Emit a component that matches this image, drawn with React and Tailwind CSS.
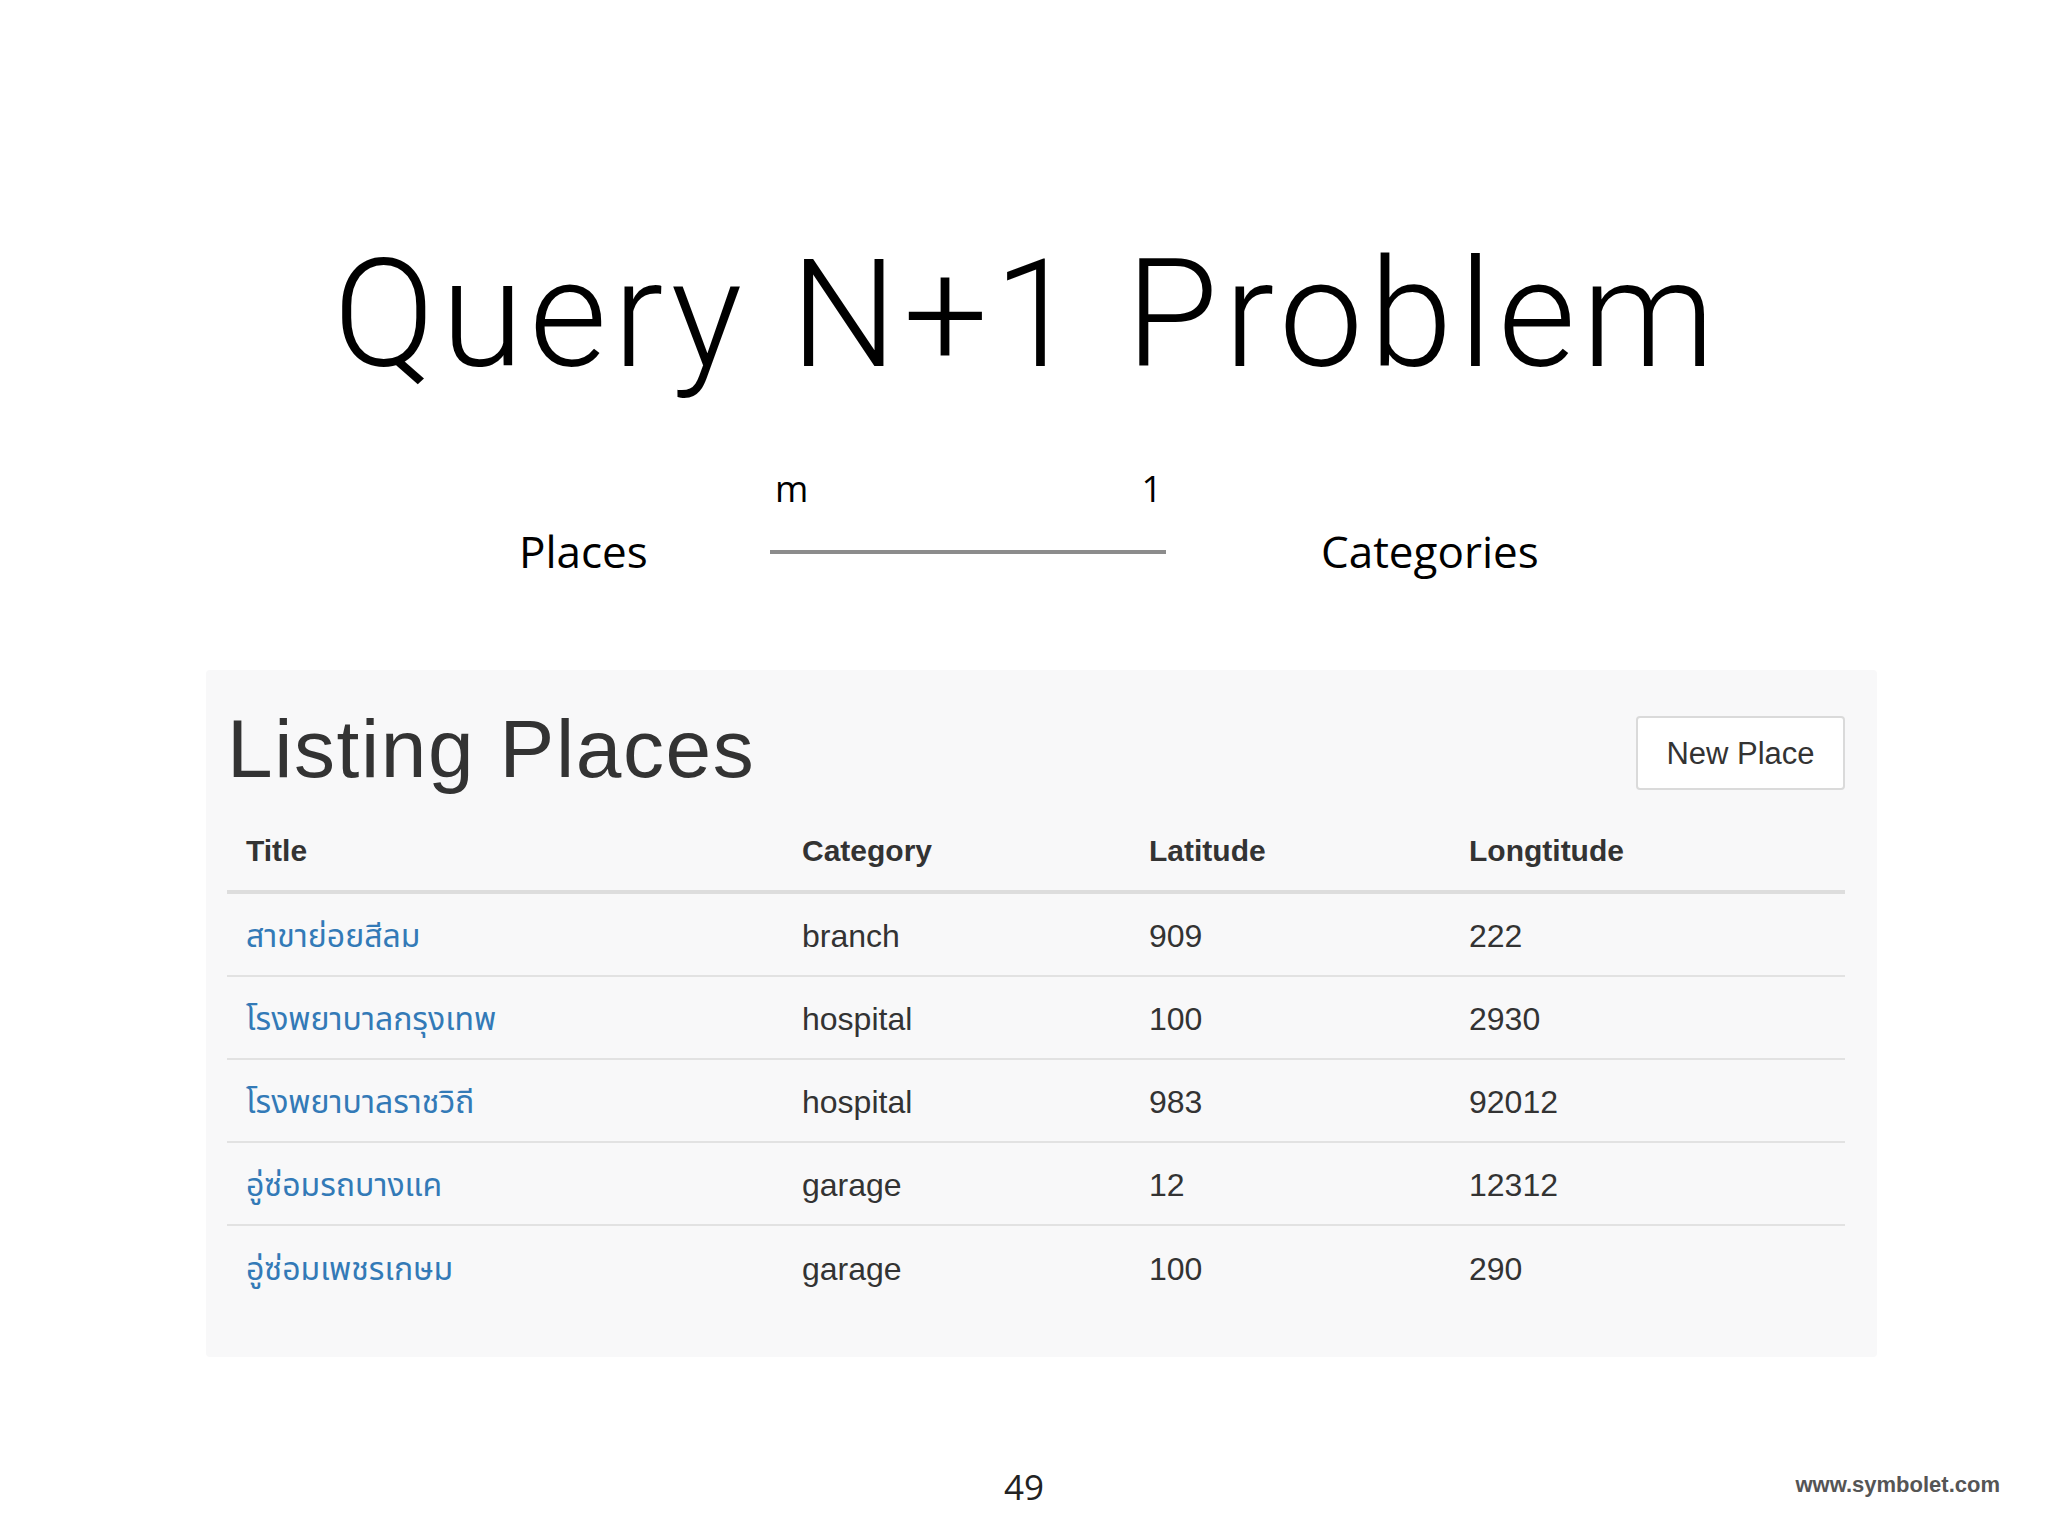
import React from 'react';

const rows = [
  { title: 'สาขาย่อยสีลม', category: 'branch', lat: '909', lng: '222' },
  { title: 'โรงพยาบาลกรุงเทพ', category: 'hospital', lat: '100', lng: '2930' },
  { title: 'โรงพยาบาลราชวิถี', category: 'hospital', lat: '983', lng: '92012' },
  { title: 'อู่ซ่อมรถบางแค', category: 'garage', lat: '12', lng: '12312' },
  { title: 'อู่ซ่อมเพชรเกษม', category: 'garage', lat: '100', lng: '290' },
];

const cols = 'grid grid-cols-[557px_347px_320px_394px]';

const App = () => {
  return (
    <div className="w-[2048px] h-[1536px] bg-white flex flex-col overflow-hidden text-black">
      {/* slide title */}
      <h1 className="mt-[240px] pl-[6px] text-center text-[150px] leading-none font-light tracking-[6px] font-['Roboto',sans-serif]">
        Query N+1 Problem
      </h1>

      {/* relation: places m..1 categories */}
      <div className="mt-[81px] flex pl-[519px] font-['Open_Sans',sans-serif]">
        <div className="w-[251px] pt-[58px] text-[44px] leading-none">Places</div>
        <div className="w-[396px] flex flex-col">
          <div className="flex justify-between pl-[5px] pr-[4px] text-[36px] leading-none">
            <span>m</span>
            <span>1</span>
          </div>
          <div className="mt-[43px] h-[4px] bg-[#8c8c8c]"></div>
        </div>
        <div className="ml-[155px] pt-[58px] text-[44px] leading-none">Categories</div>
      </div>

      {/* screenshot of the listing page */}
      <div className="mt-[97px] ml-[206px] w-[1671px] h-[687px] rounded-[4px] bg-[#f8f8f9] pt-[38px] pl-[21px] pr-[32px] font-['Liberation_Sans','Noto_Sans_Thai','Loma','Garuda',sans-serif] text-[#333]">
        <div className="flex justify-between items-start">
          <h2 className="text-[82px] leading-none tracking-[1.6px]">Listing Places</h2>
          <button className="mt-[8px] w-[209px] h-[74px] border-2 border-[#dadada] rounded-[4px] bg-white text-[31px] leading-none text-[#333]">
            New Place
          </button>
        </div>

        <div className={`${cols} mt-[46px] pb-[24px] border-b-4 border-[#dddddd] text-[30px] leading-none font-bold`}>
          <div className="pl-[19px]">Title</div>
          <div className="pl-[18px]">Category</div>
          <div className="pl-[18px]">Latitude</div>
          <div className="pl-[18px]">Longtitude</div>
        </div>

        {rows.map((row, i) => (
          <div
            key={i}
            className={`${cols} h-[83px] items-center text-[32px] leading-none ${i < rows.length - 1 ? 'border-b-2 border-[#e2e2e2]' : ''}`}
          >
            <div className="pl-[19px] pt-[2px] text-[#337ab7]">{row.title}</div>
            <div className="pl-[18px] pt-[2px]">{row.category}</div>
            <div className="pl-[18px] pt-[2px]">{row.lat}</div>
            <div className="pl-[18px] pt-[2px]">{row.lng}</div>
          </div>
        ))}
      </div>

      {/* footer */}
      <div className="mt-[112px] grid grid-cols-3 items-start">
        <div></div>
        <div className="text-center text-[35px] leading-none text-[#222] font-['Open_Sans',sans-serif]">49</div>
        <div className="mt-[5px] pr-[48px] text-right text-[22px] leading-none font-bold text-[#555] font-['Liberation_Sans',sans-serif]">
          www.symbolet.com
        </div>
      </div>
    </div>
  );
};

export default App;
